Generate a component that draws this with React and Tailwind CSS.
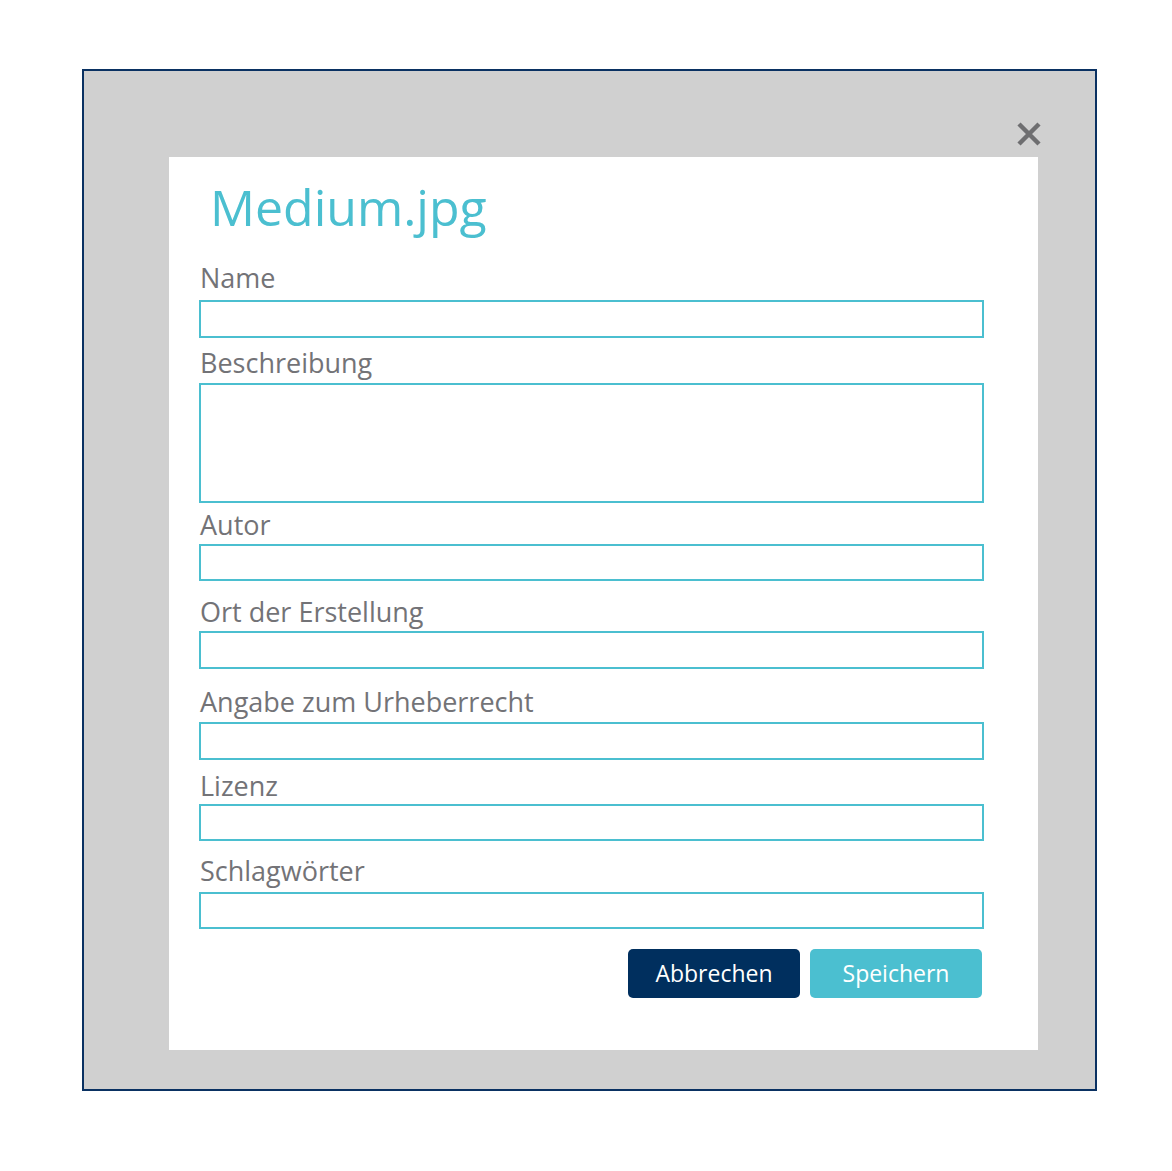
const fields = [
  { label: 'Name', top: 'mt-[31px]', gap: 'mb-[7px]', h: 'h-[38px]' },
  { label: 'Beschreibung', top: 'mt-[10px]', gap: 'mb-[5px]', h: 'h-[120px]', area: true },
  { label: 'Autor', top: 'mt-[7px]', gap: 'mb-[4px]', h: 'h-[37px]' },
  { label: 'Ort der Erstellung', top: 'mt-[16px]', gap: 'mb-[4px]', h: 'h-[38px]' },
  { label: 'Angabe zum Urheberrecht', top: 'mt-[18px]', gap: 'mb-[5px]', h: 'h-[38px]' },
  { label: 'Lizenz', top: 'mt-[11px]', gap: 'mb-[3px]', h: 'h-[37px]' },
  { label: 'Schlagwörter', top: 'mt-[15px]', gap: 'mb-[6px]', h: 'h-[37px]' },
]

const CloseIcon = () => (
  <svg width="24" height="24" viewBox="0 0 24 24" fill="none">
    <path d="M2 2L22 22M22 2L2 22" stroke="#6e6e70" strokeWidth="4.5" strokeLinecap="butt" />
  </svg>
)

const App = () => {
  return (
    <div className="min-h-screen bg-white pt-[69px] pl-[82px]" style={{ fontFamily: "'Open Sans', 'Noto Sans', sans-serif" }}>
      <div className="relative w-[1015px] h-[1022px] border-2 border-[#0a3162] bg-[#d0d0d0] pt-[86px] pl-[85px]">
        {/* Close */}
        <button className="absolute left-[933px] top-[51px]" aria-label="Schließen">
          <CloseIcon />
        </button>

        {/* Dialog panel */}
        <div className="w-[869px] h-[893px] bg-white pt-[25px] pl-[30px] pr-[54px]">
          <h1 className="pl-[11px] text-[50px] leading-[50px] text-[#4bbfd0] font-normal">Medium.jpg</h1>

          <form className="flex flex-col">
            {fields.map((f) => (
              <div key={f.label} className={f.top}>
                <label className={`block pl-[1px] text-[27px] leading-[30px] text-[#737377] ${f.gap}`}>{f.label}</label>
                {f.area ? (
                  <textarea className={`block w-full resize-none border-2 border-[#4bbfd0] outline-none ${f.h}`} />
                ) : (
                  <input type="text" className={`block w-full border-2 border-[#4bbfd0] outline-none ${f.h}`} />
                )}
              </div>
            ))}

            <div className="mt-[20px] flex justify-end gap-[10px] pr-[2px]">
              <button type="button" className="w-[172px] h-[49px] rounded-[5px] bg-[#002f5e] text-white text-[23px] font-medium">
                Abbrechen
              </button>
              <button type="button" className="w-[172px] h-[49px] rounded-[5px] bg-[#4bbfd0] text-white text-[23px] font-medium">
                Speichern
              </button>
            </div>
          </form>
        </div>
      </div>
    </div>
  )
}

export default App
